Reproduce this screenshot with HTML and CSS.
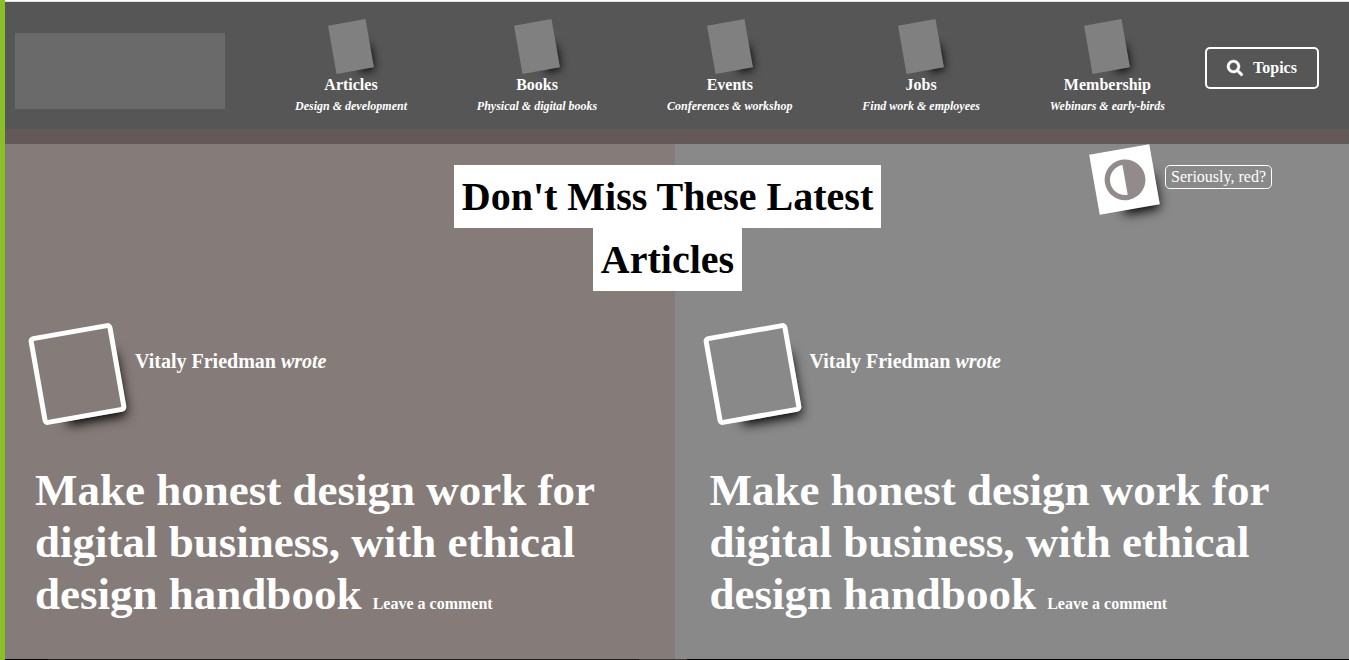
FILE: index.html
```html
<!DOCTYPE html>
<html lang="en">
<head>
<meta charset="utf-8">
<meta name="viewport" content="width=device-width, initial-scale=1">
<title>Latest Articles</title>
<link rel="stylesheet" href="styles.css">
</head>
<body>
<div class="edge"></div>
<header class="header">
  <div class="logo"></div>
  <nav class="nav">
    <a class="nav-item" href="#"><span class="nav-icon"></span><span class="nav-label">Articles</span><em class="nav-note">Design &amp; development</em></a>
    <a class="nav-item" href="#"><span class="nav-icon"></span><span class="nav-label">Books</span><em class="nav-note">Physical &amp; digital books</em></a>
    <a class="nav-item" href="#"><span class="nav-icon"></span><span class="nav-label">Events</span><em class="nav-note">Conferences &amp; workshop</em></a>
    <a class="nav-item" href="#"><span class="nav-icon"></span><span class="nav-label">Jobs</span><em class="nav-note">Find work &amp; employees</em></a>
    <a class="nav-item" href="#"><span class="nav-icon"></span><span class="nav-label">Membership</span><em class="nav-note">Webinars &amp; early-birds</em></a>
  </nav>
  <button class="topics" type="button">
    <svg class="topics-icon" viewBox="0 0 512 512" aria-hidden="true"><path fill="currentColor" stroke="currentColor" stroke-width="12" d="M505 442.700 405.300 343c-4.500-4.500-10.600-7-17-7H372c27.600-35.300 44-79.700 44-128C416 93.100 322.900 0 208 0S0 93.100 0 208s93.100 208 208 208c48.300 0 92.700-16.400 128-44v16.300c0 6.400 2.500 12.500 7 17l99.700 99.700c9.400 9.400 24.600 9.400 33.900 0l28.300-28.300c9.400-9.400 9.400-24.600.1-34zM208 336c-70.700 0-128-57.200-128-128 0-70.700 57.200-128 128-128 70.700 0 128 57.200 128 128 0 70.700-57.200 128-128 128z"/></svg>
    <span>Topics</span>
  </button>
</header>
<main class="main">
  <div class="intro">
    <h1 class="intro-title"><span class="intro-mark">Don't Miss These Latest Articles</span></h1>
    <div class="theme">
      <button class="theme-button" type="button" aria-labelledby="theme-label">
        <svg class="theme-icon" viewBox="0 0 512 512" aria-hidden="true"><path fill="currentColor" d="M8 256c0 137 111 248 248 248s248-111 248-248S393 8 256 8 8 119 8 256zm248 184V72c-101.700 0-184 82.300-184 184 0 101.700 82.300 184 184 184z" fill-rule="evenodd"/></svg>
      </button>
      <span class="theme-label" id="theme-label">Seriously, red?</span>
    </div>
  </div>
  <article class="article article-warm">
    <div class="author"><div class="avatar"></div><p class="author-name">Vitaly Friedman <em>wrote</em></p></div>
    <div class="headline"><h2 class="article-title">Make honest design work for digital business, with ethical design handbook</h2> <a class="comment" href="#">Leave a comment</a></div>
  </article>
  <article class="article">
    <div class="author"><div class="avatar"></div><p class="author-name">Vitaly Friedman <em>wrote</em></p></div>
    <div class="headline"><h2 class="article-title">Make honest design work for digital business, with ethical design handbook</h2> <a class="comment" href="#">Leave a comment</a></div>
  </article>
</main>
<div class="rule"><span class="rule-dark"></span><span class="rule-soft"></span></div>
</body>
</html>
```

FILE: styles.css
```css
* { box-sizing: border-box; }

body {
  position: relative;
  margin: 0;
  font-family: "Liberation Serif", "Times New Roman", serif;
  font-size: 16px;
  color: #fff;
  background: #898989;
}

a { color: inherit; text-decoration: none; }

.edge {
  position: absolute;
  inset: 0 auto 0 0;
  z-index: 2;
  width: 5px;
  background: #8bbf26;
}

.header {
  display: flex;
  align-items: center;
  padding: 16px 30px 11px 15px;
  border-bottom: 15px solid #645959;
  background: #565656;
  box-shadow: inset 0 1px #fff, inset 0 2px #dfe1e5;
}

.logo {
  width: 210px;
  height: 76px;
  margin-top: 8px;
  background: #6a6a6a;
}

.nav {
  display: flex;
  flex: 1;
  justify-content: space-between;
  margin: 0 40px 0 70px;
}

.nav-item {
  display: flex;
  flex-direction: column;
  align-items: center;
  font-weight: bold;
}

.nav-icon {
  width: 38px;
  height: 49px;
  margin: 6px 0 5px;
  background: #808080;
  box-shadow: 12px 14px 10px -12px #000;
  transform: rotate(-10deg);
}

.nav-label { line-height: 18px; }

.nav-note {
  font-size: 12px;
  line-height: 24px;
}

.topics {
  display: flex;
  align-items: center;
  justify-content: center;
  gap: 10px;
  width: 114px;
  height: 42px;
  margin-top: 2px;
  padding: 0;
  border: 2px solid #fff;
  border-radius: 5px;
  background: transparent;
  color: inherit;
  font: bold 16px "Liberation Serif", "Times New Roman", serif;
}

.topics-icon {
  width: 16px;
  height: 16px;
  overflow: visible;
}

.main {
  position: relative;
  display: grid;
  grid-template-columns: 1fr 1fr;
}

.intro {
  position: absolute;
  inset: 0 0 auto;
  display: grid;
  grid-template-columns: 1fr 440px 1fr;
  padding: 0 14px 0 0;
}

.intro-title {
  grid-column: 2;
  margin: 21px 0 0;
  font-size: 40px;
  line-height: 63px;
  text-align: center;
  color: #000;
}

.intro-mark {
  padding: 9px 8px;
  background: #fff;
  -webkit-box-decoration-break: clone;
  box-decoration-break: clone;
}

.theme {
  display: flex;
  align-items: flex-start;
  justify-content: flex-end;
  gap: 10px;
  padding: 5px 63px 0 0;
}

.theme-button {
  display: grid;
  place-items: center;
  width: 61px;
  height: 61px;
  padding: 0;
  border: 0;
  background: #fff;
  color: #938b8b;
  box-shadow: 12px 17px 12px -13px #000;
  transform: rotate(-10deg);
}

.theme-icon { width: 42px; height: 42px; }

.theme-label {
  z-index: 1;
  margin-top: 16px;
  padding: 0 5px;
  border: 1px solid #fff;
  border-radius: 5px;
  line-height: 22px;
}

.article {
  padding: 185px 35px 39px;
  background: #898989;
}

.article-warm { background: #857b79; }

.author {
  display: flex;
  gap: 15px;
  margin-bottom: 45px;
}

.avatar {
  width: 85px;
  height: 90px;
  border: 5px solid #fff;
  border-radius: 5px;
  box-shadow: 12px 17px 12px -13px #000;
  transform: rotate(-10deg);
}

.author-name {
  margin: 20px 0 0;
  font-size: 20px;
  font-weight: bold;
  line-height: 24px;
}

.headline {
  font-size: 45px;
  font-weight: bold;
  line-height: 52px;
}

.article-title {
  display: inline;
  margin: 0;
  font-size: 45px;
}

.comment {
  font-size: 16px;
  line-height: 20px;
}

.rule {
  display: flex;
  justify-content: space-between;
  height: 1px;
  padding-left: 48px;
  background: #000;
}

.rule-dark { width: 591px; background: #231f20; }

.rule-soft {
  flex: 1;
  background: linear-gradient(90deg, #3c3838 48px, #000 48px);
}
```
